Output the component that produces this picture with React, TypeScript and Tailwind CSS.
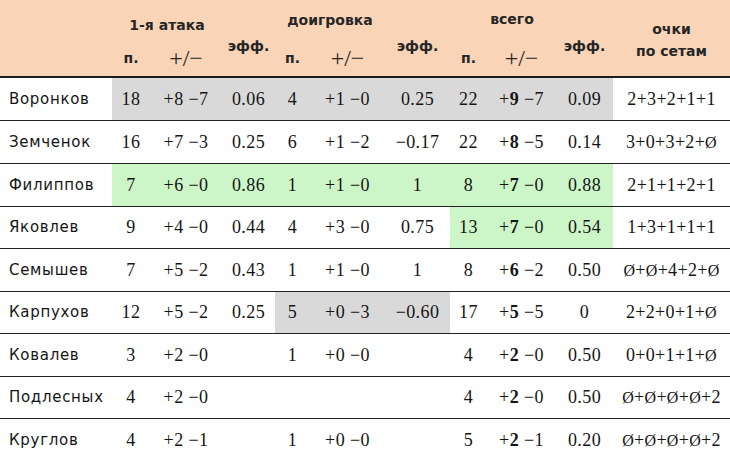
import React from "react";

type Row = {
  name: string;
  h: string;
  cells: (string | React.ReactNode)[];
  sets: string;
  bg: string[];
};

const W = [
  "w-[112px]",
  "w-[38px]",
  "w-[72px]",
  "w-[53px]",
  "w-[35px]",
  "w-[75px]",
  "w-[65px]",
  "w-[37px]",
  "w-[69px]",
  "w-[57px]",
  "w-[117px]",
];

const GREY = "bg-[#d9d9d9]";
const GREEN = "bg-[#ccf6c8]";

// +N −M, первая цифра жирная в колонке "всего"
const PM = ({ p, m, bold }: { p: string; m: string; bold?: boolean }) => (
  <span>
    +{bold ? <b className="font-bold">{p}</b> : p}
    {" "}−{m}
  </span>
);

// очки по сетам: Ø чуть меньше, как перечёркнутый ноль
const Sets = ({ s }: { s: string }) => (
  <span>
    {s.split("").map((ch, i) =>
      ch === "Ø" ? (
        <span key={i} className="text-[16px]">
          Ø
        </span>
      ) : (
        <span key={i}>{ch}</span>
      )
    )}
  </span>
);

const allGrey = ["", GREY, GREY, GREY, GREY, GREY, GREY, GREY, GREY, GREY];
const allGreen = ["", GREEN, GREEN, GREEN, GREEN, GREEN, GREEN, GREEN, GREEN, GREEN];
const totalGreen = ["", "", "", "", "", "", "", GREEN, GREEN, GREEN];
const extraGrey = ["", "", "", "", GREY, GREY, GREY, "", "", ""];
const none: string[] = [];

const rows: Row[] = [
  {
    name: "Воронков",
    h: "h-[43px]",
    cells: ["18", <PM p="8" m="7" />, "0.06", "4", <PM p="1" m="0" />, "0.25", "22", <PM p="9" m="7" bold />, "0.09"],
    sets: "2+3+2+1+1",
    bg: allGrey,
  },
  {
    name: "Земченок",
    h: "h-[43px]",
    cells: ["16", <PM p="7" m="3" />, "0.25", "6", <PM p="1" m="2" />, "−0.17", "22", <PM p="8" m="5" bold />, "0.14"],
    sets: "3+0+3+2+Ø",
    bg: none,
  },
  {
    name: "Филиппов",
    h: "h-[43px]",
    cells: ["7", <PM p="6" m="0" />, "0.86", "1", <PM p="1" m="0" />, "1", "8", <PM p="7" m="0" bold />, "0.88"],
    sets: "2+1+1+2+1",
    bg: allGreen,
  },
  {
    name: "Яковлев",
    h: "h-[42px]",
    cells: ["9", <PM p="4" m="0" />, "0.44", "4", <PM p="3" m="0" />, "0.75", "13", <PM p="7" m="0" bold />, "0.54"],
    sets: "1+3+1+1+1",
    bg: totalGreen,
  },
  {
    name: "Семышев",
    h: "h-[43px]",
    cells: ["7", <PM p="5" m="2" />, "0.43", "1", <PM p="1" m="0" />, "1", "8", <PM p="6" m="2" bold />, "0.50"],
    sets: "Ø+Ø+4+2+Ø",
    bg: none,
  },
  {
    name: "Карпухов",
    h: "h-[42px]",
    cells: ["12", <PM p="5" m="2" />, "0.25", "5", <PM p="0" m="3" />, "−0.60", "17", <PM p="5" m="5" bold />, "0"],
    sets: "2+2+0+1+Ø",
    bg: extraGrey,
  },
  {
    name: "Ковалев",
    h: "h-[43px]",
    cells: ["3", <PM p="2" m="0" />, "", "1", <PM p="0" m="0" />, "", "4", <PM p="2" m="0" bold />, "0.50"],
    sets: "0+0+1+1+Ø",
    bg: none,
  },
  {
    name: "Подлесных",
    h: "h-[42px]",
    cells: ["4", <PM p="2" m="0" />, "", "", "", "", "4", <PM p="2" m="0" bold />, "0.50"],
    sets: "Ø+Ø+Ø+Ø+2",
    bg: none,
  },
  {
    name: "Круглов",
    h: "h-[43px]",
    cells: ["4", <PM p="2" m="1" />, "", "1", <PM p="0" m="0" />, "", "5", <PM p="2" m="1" bold />, "0.20"],
    sets: "Ø+Ø+Ø+Ø+2",
    bg: none,
  },
];

const sans = "font-['DejaVu_Sans',sans-serif]";
const serif = "font-['Liberation_Serif','DejaVu_Serif',serif]";

const SubHead = ({ w1, w2 }: { w1: string; w2: string }) => (
  <div className="flex h-[36px] items-center">
    <div className={`${w1} text-center text-[14px] font-semibold ${sans}`}>п.</div>
    <div className={`${w2} text-center text-[24px] leading-[24px] ${serif}`}>+/−</div>
  </div>
);

const Eff = ({ w }: { w: string }) => (
  <div className={`${w} flex items-center justify-center pt-[17px] text-[14px] font-semibold ${sans}`}>эфф.</div>
);

export default function App() {
  return (
    <div className="h-[461px] w-[730px] overflow-hidden bg-white text-[#151515]">
      {/* шапка */}
      <div className="flex h-[78px] border-b-2 border-[#1c1c1c] bg-[#f9d4b7] text-[#262626]">
        <div className={W[0]} />
        <div className="flex w-[110px] flex-col">
          <div className={`h-[40px] pt-[17px] text-center text-[14px] font-semibold leading-[16px] ${sans}`}>1-я атака</div>
          <SubHead w1={W[1]} w2={W[2]} />
        </div>
        <Eff w={W[3]} />
        <div className="flex w-[110px] flex-col">
          <div className={`h-[40px] pt-[12px] text-center text-[14px] font-semibold leading-[16px] ${sans}`}>доигровка</div>
          <SubHead w1={W[4]} w2={W[5]} />
        </div>
        <Eff w={W[6]} />
        <div className="flex w-[106px] flex-col">
          <div className={`h-[40px] pl-[18px] pt-[11px] text-center text-[14px] font-semibold leading-[16px] ${sans}`}>всего</div>
          <SubHead w1={W[7]} w2={W[8]} />
        </div>
        <Eff w={W[9]} />
        <div className={`${W[10]} flex flex-col items-center justify-center pt-[4px] text-[14px] font-semibold leading-[22px] ${sans}`}>
          <span>очки</span>
          <span>по сетам</span>
        </div>
      </div>

      {/* строки */}
      {rows.map((r, i) => (
        <div
          key={r.name}
          className={`flex ${r.h} ${i < rows.length - 1 ? "border-b border-[#222]" : ""}`}
        >
          <div className={`${W[0]} flex items-center pl-[9px] text-[15px] tracking-[0.7px] ${sans}`}>{r.name}</div>
          {r.cells.map((c, j) => (
            <div
              key={j}
              className={`${W[j + 1]} ${r.bg[j + 1] || ""} flex items-center justify-center text-[18px] tracking-[0.4px] ${serif}`}
            >
              {c}
            </div>
          ))}
          <div className={`${W[10]} flex items-center justify-center text-[18px] tracking-[0.3px] ${serif}`}>
            <Sets s={r.sets} />
          </div>
        </div>
      ))}
    </div>
  );
}
